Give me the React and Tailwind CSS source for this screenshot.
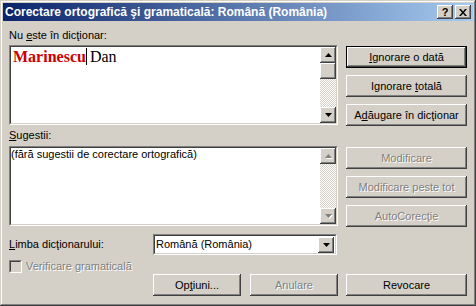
import React from "react";

const raised =
  "bg-[#d4d0c8] shadow-[inset_-1px_-1px_#404040,inset_1px_1px_#ffffff,inset_-2px_-2px_#808080,inset_2px_2px_#d4d0c8]";
const dither =
  "bg-[repeating-conic-gradient(#ffffff_0_25%,#d4d0c8_0_50%)] bg-[length:2px_2px]";
const grayText = "text-[#808080] [text-shadow:1px_1px_0_#ffffff]";

function Arrow({ up, disabled }) {
  const pts = up ? "3.5,0 7,4 0,4" : "0,0 7,0 3.5,4";
  return (
    <svg width="7" height="5" viewBox="0 0 7 5" className="overflow-visible">
      {disabled && <polygon points={pts} fill="#ffffff" transform="translate(1,1)" />}
      <polygon points={pts} fill={disabled ? "#808080" : "#000000"} />
    </svg>
  );
}

function ScrollBtn({ up, disabled }) {
  return (
    <div className={`flex h-[16px] w-[16px] items-center justify-center ${raised}`}>
      <Arrow up={up} disabled={disabled} />
    </div>
  );
}

function Sunken({ className = "", children }) {
  return (
    <div className={`border border-t-[#808080] border-l-[#808080] border-b-white border-r-white ${className}`}>
      <div className="flex h-full w-full border border-t-[#404040] border-l-[#404040] border-b-[#d4d0c8] border-r-[#d4d0c8] bg-white">
        {children}
      </div>
    </div>
  );
}

function Btn({ children, disabled, def, className = "" }) {
  const body = (
    <div className={`flex h-full w-full items-center justify-center ${raised} ${disabled ? grayText : "text-black"}`}>
      {children}
    </div>
  );
  if (def) {
    return <div className={`h-[22px] border border-black ${className}`}>{body}</div>;
  }
  return <div className={`h-[22px] ${className}`}>{body}</div>;
}

export default function App() {
  return (
    <div className="h-[306px] w-[476px] bg-[#d4d0c8] p-[3px] font-['Liberation_Sans',Arial,sans-serif] text-[11px] leading-[13px] text-black shadow-[inset_-1px_-1px_#404040,inset_1px_1px_#d4d0c8,inset_-2px_-2px_#808080,inset_2px_2px_#ffffff]">
      <div className="flex h-[18px] items-center justify-between bg-[linear-gradient(90deg,#0a246a,#a6caf0)] pl-[2px] pr-[2px]">
        <span className="text-[12px] font-bold text-white">
          Corectare ortografică şi gramaticală: Română (România)
        </span>
        <div className="flex gap-[2px]">
          <div className={`flex h-[14px] w-[16px] items-center justify-center text-[11px] font-bold leading-none ${raised}`}>?</div>
          <div className={`flex h-[14px] w-[16px] items-center justify-center ${raised}`}>
            <svg width="8" height="7" viewBox="0 0 8 7">
              <path d="M0 0h2l2 2.5L6 0h2L5 3.5 8 7H6L4 4.5 2 7H0l3-3.5z" fill="#000" />
            </svg>
          </div>
        </div>
      </div>

      <div className="pl-[6px]">
        <div className="flex gap-[8px]">
          <div className="w-[329px]">
            <div className="mt-[8px]">
              Nu <u>e</u>ste în dicţionar:
            </div>
            <Sunken className="mt-[3px] h-[80px]">
              <div className="flex-1 pl-[2px] pt-[1px] font-['Liberation_Serif',serif] text-[16px] leading-[18px]">
                <span className="font-bold text-[#cc0000]">Marinescu</span>
                <span className="border-l border-black pl-[3px]">Dan</span>
              </div>
              <div className="flex w-[16px] flex-col">
                <ScrollBtn up />
                <div className={`h-[16px] ${raised}`} />
                <div className={`flex-1 ${dither}`} />
                <ScrollBtn />
              </div>
            </Sunken>
            <div className="mt-[4px]">
              <u>S</u>ugestii:
            </div>
            <Sunken className="mt-[4px] h-[80px]">
              <div className="flex-1">(fără sugestii de corectare ortografică)</div>
              <div className="flex w-[16px] flex-col">
                <ScrollBtn up disabled />
                <div className={`flex-1 ${dither}`} />
                <ScrollBtn disabled />
              </div>
            </Sunken>
          </div>

          <div className="flex w-[121px] flex-col pt-[25px]">
            <Btn def>
              <span><u>I</u>gnorare o dată</span>
            </Btn>
            <Btn className="mt-[7px]">
              <span>Ignorare <u>t</u>otală</span>
            </Btn>
            <Btn className="mt-[7px]">
              <span>A<u>d</u>ăugare în dicţionar</span>
            </Btn>
            <Btn disabled className="mt-[21px]">Modificare</Btn>
            <Btn disabled className="mt-[7px]">Modificare peste tot</Btn>
            <Btn disabled className="mt-[7px]">AutoCorecţie</Btn>
          </div>
        </div>

        <div className="mt-[7px] flex items-center">
          <div className="w-[144px]">
            <u>L</u>imba dicţionarului:
          </div>
          <Sunken className="h-[21px] w-[184px]">
            <div className="flex flex-1 items-center pl-[1px]">Română (România)</div>
            <div className="p-[1px]">
              <ScrollBtn />
            </div>
          </Sunken>
        </div>

        <div className="mt-[5px] flex h-[13px] items-center gap-[4px]">
          <div className="h-[13px] w-[13px] border border-t-[#808080] border-l-[#808080] border-b-white border-r-white">
            <div className="h-full w-full border border-t-[#404040] border-l-[#404040] border-b-[#d4d0c8] border-r-[#d4d0c8] bg-[#d4d0c8]" />
          </div>
          <span className={grayText}>Verificare gramaticală</span>
        </div>

        <div className="mt-[1px] flex pl-[144px]">
          <Btn className="w-[88px]">
            <span>Op<u>ţ</u>iuni...</span>
          </Btn>
          <Btn disabled className="ml-[9px] w-[88px]">Anulare</Btn>
          <Btn className="ml-[8px] w-[121px]">Revocare</Btn>
        </div>
      </div>
    </div>
  );
}
